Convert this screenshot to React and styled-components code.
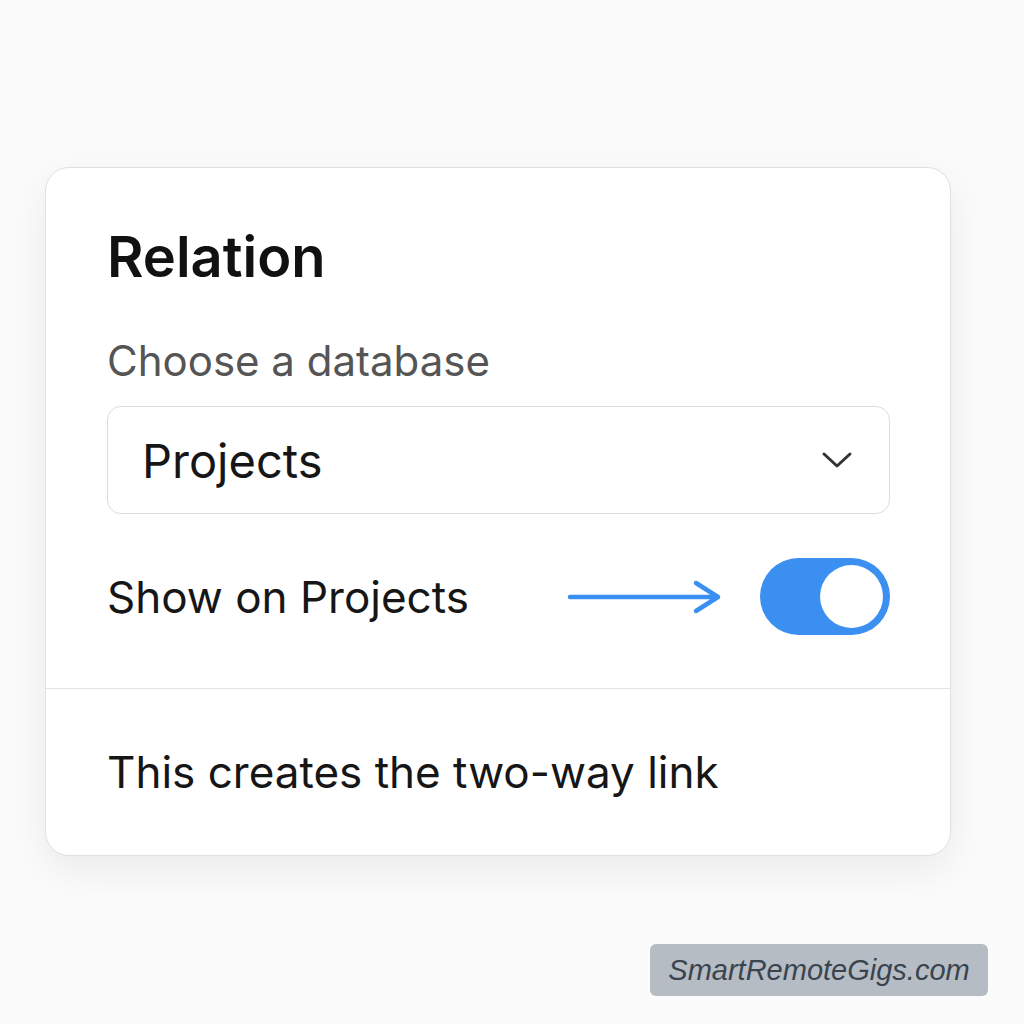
import React from "react";
import styled, { createGlobalStyle } from "styled-components";

const GlobalStyle = createGlobalStyle`
  html, body {
    margin: 0;
    padding: 0;
    background: #fbfbfb;
    font-family: Inter, "Noto Sans", sans-serif;
  }
`;

const App = () => {
  return (
    <>
      <GlobalStyle />
      <Page>
        <Card>
          <Top>
            <Title>Relation</Title>
            <Label>Choose a database</Label>
            <Select>
              <span>Projects</span>
              <svg width="32" height="18" viewBox="0 0 32 18" fill="none">
                <path d="M3 3l13 12L29 3" stroke="#333" strokeWidth="3" strokeLinecap="round" strokeLinejoin="round" />
              </svg>
            </Select>
            <ToggleRow>
              <RowLabel>Show on Projects</RowLabel>
              <Controls>
                <svg width="156" height="40" viewBox="0 0 156 40" fill="none">
                  <path d="M3 20h148M129 6l22 14-22 14" stroke="#3a8ff0" strokeWidth="4.5" strokeLinecap="round" strokeLinejoin="round" />
                </svg>
                <Switch $on>
                  <Knob />
                </Switch>
              </Controls>
            </ToggleRow>
          </Top>
          <Footer>This creates the two-way link</Footer>
        </Card>
        <Badge>SmartRemoteGigs.com</Badge>
      </Page>
    </>
  );
};

export default App;

// Styled Components

const Page = styled.div`
  width: 1024px;
  height: 1024px;
  padding: 167px 0 0 45px;
  box-sizing: border-box;
  display: flex;
  flex-direction: column;
`;

const Card = styled.div`
  width: 906px;
  height: 689px;
  box-sizing: border-box;
  background: #fff;
  border: 1.5px solid #e0e0e0;
  border-radius: 24px;
  box-shadow: 0 14px 40px rgba(0, 0, 0, 0.07);
  display: flex;
  flex-direction: column;
`;

const Top = styled.div`
  padding: 54px 60px 0 61px;
  height: 521px;
  box-sizing: border-box;
  border-bottom: 1.5px solid #e4e4e4;
`;

const Title = styled.h1`
  margin: 0;
  font-size: 56px;
  font-weight: 600;
  letter-spacing: 0;
  color: #111;
  line-height: 70px;
`;

const Label = styled.div`
  margin-top: 43px;
  font-size: 42px;
  color: #555;
  line-height: 52px;
`;

const Select = styled.div`
  margin-top: 19px;
  height: 108px;
  box-sizing: border-box;
  border: 1.5px solid #dcdcdc;
  border-radius: 14px;
  padding: 0 36px 0 34px;
  display: flex;
  align-items: center;
  justify-content: space-between;
  font-size: 47px;
  color: #161616;
`;

const ToggleRow = styled.div`
  margin-top: 44px;
  display: flex;
  align-items: center;
  justify-content: space-between;
`;

const RowLabel = styled.div`
  font-size: 44px;
  color: #161616;
`;

const Controls = styled.div`
  display: flex;
  align-items: center;
  gap: 37px;
`;

const Switch = styled.div`
  width: 130px;
  height: 77px;
  border-radius: 40px;
  background: ${(p) => (p.$on ? "#3a8ff0" : "#ccc")};
  display: flex;
  align-items: center;
  justify-content: ${(p) => (p.$on ? "flex-end" : "flex-start")};
  padding: 0 7px;
  box-sizing: border-box;
`;

const Knob = styled.div`
  width: 63px;
  height: 63px;
  border-radius: 50%;
  background: #fff;
`;

const Footer = styled.div`
  flex: 1;
  display: flex;
  align-items: center;
  padding: 0 62px 0 61px;
  font-size: 44px;
  color: #161616;
`;

const Badge = styled.div`
  align-self: flex-start;
  margin: 88px 0 0 605px;
  width: 338px;
  height: 52px;
  box-sizing: border-box;
  background: #b5bcc3;
  border-radius: 6px;
  display: flex;
  align-items: center;
  justify-content: center;
  font-family: "Liberation Sans", Arial, sans-serif;
  font-style: italic;
  font-size: 29px;
  color: #3a4450;
`;
